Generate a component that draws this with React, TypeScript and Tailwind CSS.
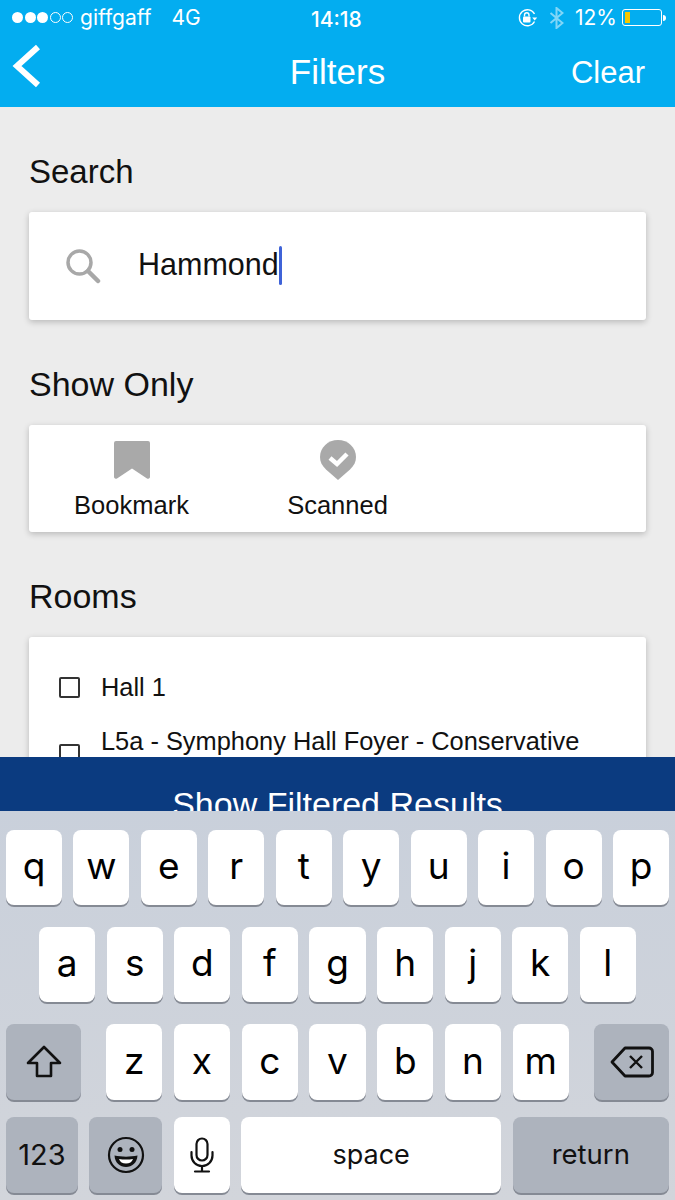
import React from 'react';

const ROW_ONE = ['q', 'w', 'e', 'r', 't', 'y', 'u', 'i', 'o', 'p'];
const ROW_TWO = ['a', 's', 'd', 'f', 'g', 'h', 'j', 'k', 'l'];
const ROW_THREE = ['z', 'x', 'c', 'v', 'b', 'n', 'm'];

const LetterKey: React.FC<{ label: string }> = ({ label }) => (
  <div className="flex-1 h-full rounded-[8px] bg-white shadow-[0_2px_0_#858a94] flex items-center justify-center pb-[3px] text-[37px] text-black">
    {label}
  </div>
);

const StatusBar: React.FC = () => (
  <div className="relative h-[35px] flex items-center justify-between pl-[12px] pr-[9px] text-white text-[21px] font-['Inter',sans-serif]">
    <div className="flex items-center">
      <div className="flex gap-[1.5px]">
        {[0, 1, 2].map((i) => (
          <span key={i} className="w-[11px] h-[11px] rounded-full bg-white" />
        ))}
        {[3, 4].map((i) => (
          <span key={i} className="w-[11px] h-[11px] rounded-full border border-white" />
        ))}
      </div>
      <span className="ml-[7px]">giffgaff</span>
      <span className="ml-[20px]">4G</span>
    </div>
    <span className="absolute left-[311px] top-[4px] font-medium">14:18</span>
    <div className="flex items-center">
      <svg width="22" height="20" viewBox="0 0 22 20" fill="none" stroke="white" strokeWidth="1.4">
        <path d="M17.5 13.5A8 8 0 1 1 17.5 6" />
        <path d="M15.2 9.5h5l-2.5 3z" fill="white" stroke="none" />
        <rect x="6" y="8.5" width="7.5" height="6" rx="1" fill="white" stroke="none" />
        <path d="M7.5 8.5V7a2.2 2.2 0 0 1 4.500 0v1.500" />
      </svg>
      <svg className="ml-[10px] opacity-50" width="15" height="22" viewBox="0 0 15 22" fill="none" stroke="white" strokeWidth="2">
        <path d="M1.500 6l12 10-6 5V1l6 5-12 10" />
      </svg>
      <span className="ml-[11px]">12%</span>
      <div className="ml-[5px] w-[40px] h-[17px] rounded-[3px] border border-white p-[2px]">
        <div className="w-[5px] h-full bg-[#f6c700]" />
      </div>
      <div className="w-[3px] h-[6px] rounded-r-full bg-white ml-[1px]" />
    </div>
  </div>
);

const App: React.FC = () => {
  return (
    <div className="h-[1200px] w-[675px] overflow-hidden flex flex-col bg-[#ececec] font-['Liberation_Sans',sans-serif]">
      <header className="h-[107px] shrink-0 bg-[#03adf0]">
        <StatusBar />
        <div className="relative flex items-center justify-center h-[72px]">
          <svg className="absolute left-[11px] top-[8px]" width="32" height="46" viewBox="0 0 32 46" fill="none" stroke="white" strokeWidth="6">
            <path d="M27 4L6 23l21 19" />
          </svg>
          <span className="text-white text-[35px] mt-[3px]">Filters</span>
          <span className="absolute right-[30px] top-[15px] text-white text-[31px]">Clear</span>
        </div>
      </header>

      <main className="flex-1 min-h-0 overflow-hidden px-[29px]">
        <h2 className="mt-[45px] mb-[20px] h-[40px] leading-[40px] text-[33px] text-[#111]">Search</h2>
        <div className="h-[108px] rounded-[3px] bg-white shadow-[0_2px_6px_rgba(0,0,0,0.22)] flex items-center pl-[36px]">
          <svg width="36" height="36" viewBox="0 0 36 36" fill="none" stroke="#a8a8a8">
            <circle cx="14.500" cy="14.500" r="11.500" strokeWidth="3.500" />
            <path d="M23 23l10 10" strokeWidth="4.500" strokeLinecap="round" />
          </svg>
          <span className="ml-[37px] -mt-[2px] text-[30.500px] text-[#111]">Hammond</span>
          <span className="w-[3px] h-[39px] -mt-[1px] rounded-full bg-[#3f63d8]" />
        </div>

        <h2 className="mt-[44px] mb-[21px] h-[40px] leading-[40px] text-[34px] text-[#111]">Show Only</h2>
        <div className="h-[107px] rounded-[3px] bg-white shadow-[0_2px_6px_rgba(0,0,0,0.22)] flex">
          <div className="w-[205px] flex flex-col items-center pt-[16px]">
            <svg width="36" height="38" viewBox="0 0 36 38" fill="#a9a9a9">
              <path d="M2 0h32a2 2 0 0 1 2 2v34a2 2 0 0 1-3 1.500L18 27.500 3 37.500a2 2 0 0 1-3-1.500V2a2 2 0 0 1 2-2z" />
            </svg>
            <span className="mt-[11px] text-[25.500px] leading-[30px] text-[#111]">Bookmark</span>
          </div>
          <div className="w-[207px] flex flex-col items-center pt-[15px]">
            <svg width="36" height="40" viewBox="0 0 36 40" fill="none">
              <path d="M18 0c10 0 18 7.500 18 17 0 5-2 8.500-6 12.500L18 40 6 29.500C2 25.500 0 22 0 17 0 7.500 8 0 18 0z" fill="#a9a9a9" />
              <path d="M10 18l7 6L27 14" stroke="white" strokeWidth="4.500" />
            </svg>
            <span className="mt-[10px] text-[25.500px] leading-[30px] text-[#111]">Scanned</span>
          </div>
        </div>

        <h2 className="mt-[44px] mb-[21px] h-[40px] leading-[40px] text-[34px] text-[#111]">Rooms</h2>
        <div className="h-[200px] rounded-[3px] bg-white shadow-[0_2px_6px_rgba(0,0,0,0.22)] pt-[35px] pl-[30px]">
          <div className="flex items-center h-[30px]">
            <span className="w-[21px] h-[21px] rounded-[2px] border-[2.5px] border-[#333]" />
            <span className="ml-[21px] text-[25.400px] text-[#111]">Hall 1</span>
          </div>
          <div className="flex items-start mt-[24px]">
            <span className="mt-[18px] w-[21px] h-[21px] rounded-[2px] border-[2.5px] border-[#333]" />
            <span className="ml-[21px] text-[25.400px] leading-[30px] text-[#111] whitespace-nowrap">L5a - Symphony Hall Foyer - Conservative</span>
          </div>
        </div>
      </main>

      <div className="h-[54px] shrink-0 overflow-hidden bg-[#0b3b80] text-center text-white text-[34px] leading-[40px] pt-[27px]">
        Show Filtered Results
      </div>

      <div className="h-[389px] shrink-0 bg-gradient-to-b from-[#c9d0db] to-[#d2d5db] pt-[19px] font-['Inter',sans-serif]">
        <div className="h-[75px] flex gap-[11.400px] px-[6px]">
          {ROW_ONE.map((k) => <LetterKey key={k} label={k} />)}
        </div>

        <div className="mt-[22px] h-[75px] flex gap-[11.400px] px-[39px]">
          {ROW_TWO.map((k) => <LetterKey key={k} label={k} />)}
        </div>

        <div className="mt-[22px] h-[76px] flex px-[6px]">
          <div className="w-[75px] h-full rounded-[8px] bg-[#adb3bd] shadow-[0_2px_0_#858a94] flex items-center justify-center">
            <svg width="36" height="34" viewBox="0 0 36 34" fill="none" stroke="#111" strokeWidth="2.600" strokeLinejoin="round">
              <path d="M18 2L2 18h9v13h14V18h9z" />
            </svg>
          </div>
          <div className="flex-1 mx-[25px] flex gap-[11.400px]">
            {ROW_THREE.map((k) => <LetterKey key={k} label={k} />)}
          </div>
          <div className="w-[75px] h-full rounded-[8px] bg-[#adb3bd] shadow-[0_2px_0_#858a94] flex items-center justify-center">
            <svg width="44" height="32" viewBox="0 0 44 32" fill="none" stroke="#111" strokeWidth="2.800" strokeLinejoin="round">
              <path d="M15 2h24a3.500 3.500 0 0 1 3.500 3.500v21a3.500 3.500 0 0 1-3.500 3.500H15L2 16z" />
              <path d="M20 10l12 12M32 10L20 22" strokeWidth="2.400" />
            </svg>
          </div>
        </div>

        <div className="mt-[17px] h-[76px] flex gap-[11.400px] px-[6px]">
          <div className="w-[72px] rounded-[8px] bg-[#adb3bd] shadow-[0_2px_0_#858a94] flex items-center justify-center text-[29px] text-[#111]">
            123
          </div>
          <div className="w-[73px] rounded-[8px] bg-[#adb3bd] shadow-[0_2px_0_#858a94] flex items-center justify-center">
            <svg width="38" height="38" viewBox="0 0 38 38" fill="none" stroke="#111" strokeWidth="2.200">
              <circle cx="19" cy="19" r="17" />
              <circle cx="13" cy="13.500" r="2.500" fill="#111" stroke="none" />
              <circle cx="25" cy="13.500" r="2.500" fill="#111" stroke="none" />
              <path d="M7.500 19.500c7 1.500 16 1.500 23 0C30 27 25 31 19 31S8 27 7.500 19.500z" fill="#111" stroke="none" />
              <path d="M12 23c4 .8 10 .8 14 0-1 3-3.500 4.500-7 4.500S13 26 12 23z" fill="white" stroke="none" />
            </svg>
          </div>
          <div className="w-[56px] rounded-[8px] bg-white shadow-[0_2px_0_#858a94] flex items-center justify-center">
            <svg width="24" height="36" viewBox="0 0 24 36" fill="none" stroke="#111" strokeWidth="2.200" strokeLinecap="round">
              <rect x="6.500" y="1.500" width="11" height="22" rx="5.500" />
              <path d="M1.500 15v3.500a10.500 10.500 0 0 0 21 0V15M12 29v5.500M5 34.500h14" />
            </svg>
          </div>
          <div className="w-[260px] rounded-[8px] bg-white shadow-[0_2px_0_#858a94] flex items-center justify-center text-[27px] text-[#111]">
            space
          </div>
          <div className="flex-1 rounded-[8px] bg-[#adb3bd] shadow-[0_2px_0_#858a94] flex items-center justify-center text-[27.500px] text-[#111]">
            return
          </div>
        </div>
      </div>
    </div>
  );
};

export default App;
